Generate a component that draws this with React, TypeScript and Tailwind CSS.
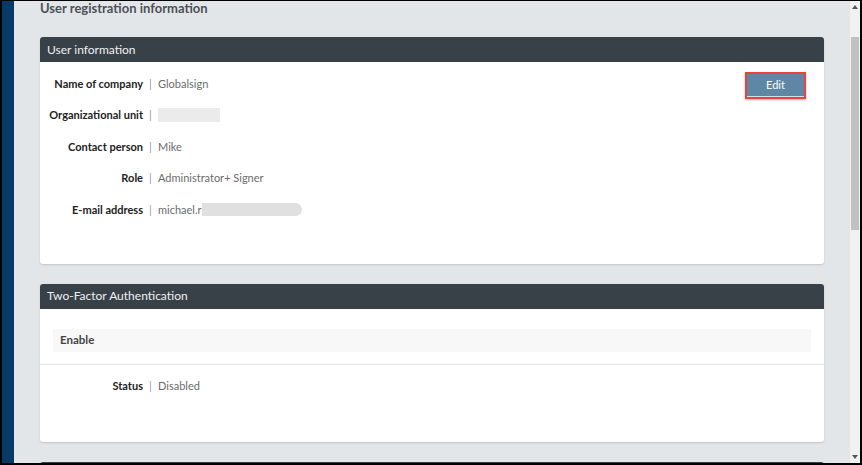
const font = "font-['Lato','Open_Sans',sans-serif]";

const Row = ({ label, children }: { label: string; children: React.ReactNode }) => (
  <div className="flex h-[31.5px] shrink-0 items-center text-[11px]">
    <div className="w-[103px] shrink-0 text-right text-[11px] font-bold text-[#222]">{label}</div>
    <div className="w-[15px] text-center text-[#999]">|</div>
    <div className="flex items-center text-[#6b6b6b]">{children}</div>
  </div>
);

const CardHeader = ({ title }: { title: string }) => (
  <div className="flex h-[25px] shrink-0 items-center rounded-t-[3px] bg-[#394148] px-[7px] text-[12px] text-[#eef0f2]">
    {title}
  </div>
);

export default function App() {
  return (
    <div className={`${font} flex h-[465px] w-[862px] overflow-hidden border-x-2 border-b-2 border-t border-black bg-[#e3e6e9]`}>
      <div className="w-[12px] shrink-0 bg-[#073a67]" />

      <div className="flex min-w-0 flex-1 flex-col overflow-hidden px-[26px]">
        <div className="h-[36px] shrink-0 text-[13px] font-bold leading-[14px] text-[#4c5054]">
          User registration information
        </div>

        <div className="shrink-0 rounded-[3px] bg-white shadow-[0_1px_2px_rgba(0,0,0,0.15)]">
          <CardHeader title="User information" />
          <div className="relative pb-[38px] pt-[6px]">
            <Row label="Name of company">Globalsign</Row>
            <Row label="Organizational unit">
              <span className="inline-block h-[14px] w-[62px] bg-[#ebebeb]" />
            </Row>
            <Row label="Contact person">Mike</Row>
            <Row label="Role">Administrator+ Signer</Row>
            <Row label="E-mail address">
              michael.r
              <span className="inline-block h-[13px] w-[100px] rounded-r-full bg-[#e0e0e0]" />
            </Row>
            <div className="absolute right-[18px] top-[10px] border-2 border-[#e8413f] shadow-[0_1px_2px_rgba(0,0,0,0.3)]">
              <button className="flex h-[23px] w-[57px] items-center justify-center border-b border-[#d6dde3] bg-[#5e86a5] text-[11px] text-white">
                Edit
              </button>
            </div>
          </div>
        </div>

        <div className="mt-[20px] shrink-0 rounded-[3px] bg-white shadow-[0_1px_2px_rgba(0,0,0,0.15)]">
          <CardHeader title="Two-Factor Authentication" />
          <div className="px-[13px] pt-[20px]">
            <div className="flex h-[23px] items-center bg-[#f8f8f8] px-[7px] text-[11.5px] font-bold text-[#444]">
              Enable
            </div>
          </div>
          <div className="mt-[12px] border-t border-[#e3e7ea] pb-[40px] pt-[6px]">
            <Row label="Status">Disabled</Row>
          </div>
        </div>

        <div className="mt-[20px] h-[20px] shrink-0 rounded-t-[3px] bg-[#394148]" />
      </div>

      <div className="flex w-[10px] shrink-0 flex-col bg-[#f1f1f1]">
        <div className="flex h-[12px] shrink-0 items-center justify-center">
          <svg width="6" height="4" viewBox="0 0 6 4"><path d="M0 4 L3 0 L6 4Z" fill="#555" /></svg>
        </div>
        <div className="mx-[1px] mt-[24px] h-[193px] shrink-0 bg-[#c1c1c1]" />
        <div className="flex-1" />
        <div className="flex h-[12px] shrink-0 items-center justify-center">
          <svg width="6" height="4" viewBox="0 0 6 4"><path d="M0 0 L3 4 L6 0Z" fill="#555" /></svg>
        </div>
      </div>
    </div>
  );
}
